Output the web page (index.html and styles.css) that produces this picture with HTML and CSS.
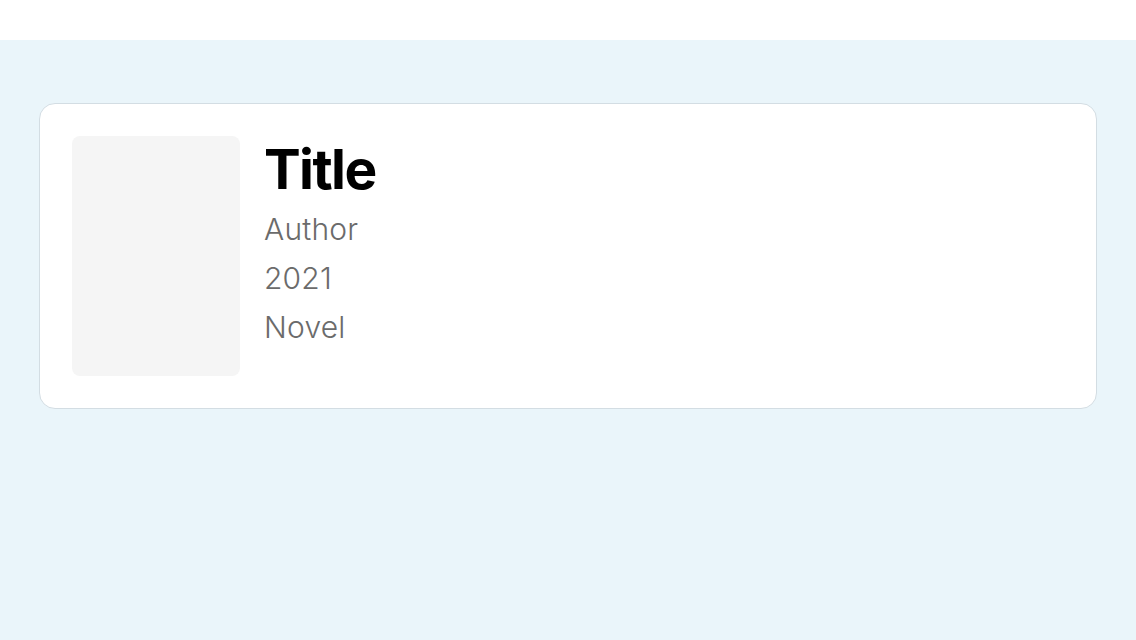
FILE: index.html
```html
<!DOCTYPE html>
<html>
<head>
<meta charset="utf-8">
<link rel="stylesheet" href="styles.css">
</head>
<body>
<header class="topbar"></header>
<main class="main">
  <article class="card">
    <div class="cover"></div>
    <div class="info">
      <h1 class="title">Title</h1>
      <p class="meta">Author</p>
      <p class="meta">2021</p>
      <p class="meta">Novel</p>
    </div>
  </article>
</main>
</body>
</html>
```
FILE: styles.css
```css
* { box-sizing: border-box; }
html, body { margin: 0; padding: 0; height: 100%; }
body {
  font-family: Inter, "Noto Sans", sans-serif;
  background: #eaf5fa;
  display: flex;
  flex-direction: column;
}
.topbar { height: 40px; background: #ffffff; flex: none; }
.main { flex: 1; padding: 63px 39px; }
.card {
  display: flex;
  gap: 24px;
  background: #ffffff;
  border: 1px solid #d3dde3;
  border-radius: 16px;
  padding: 32px;
}
.cover {
  width: 168px;
  height: 240px;
  background: #f5f5f5;
  border-radius: 8px;
  flex: none;
}
.info { display: flex; flex-direction: column; }
.title {
  margin: 0 0 3px;
  font-size: 55px;
  font-weight: 700;
  line-height: 66px;
  letter-spacing: -1.6px;
  color: #000;
}
.meta {
  margin: 0;
  font-size: 30px;
  font-weight: 300;
  line-height: 49px;
  letter-spacing: 0.2px;
  color: #6b6b6b;
}
```
